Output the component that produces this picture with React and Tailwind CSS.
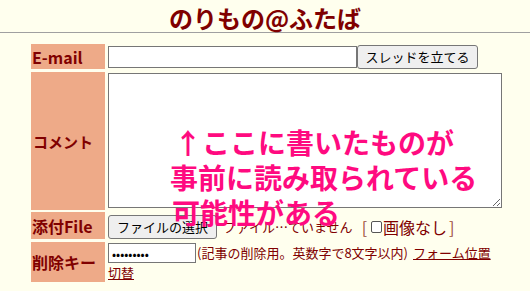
export default function App() {
  return (
    <div className="relative w-[530px] h-[291px] overflow-hidden bg-[#ffffee] font-['Noto_Sans_CJK_JP',sans-serif] text-[#800000]">
      <div className="h-[32px] flex items-center justify-center text-[24px] font-bold leading-none pt-[4px]">
        のりもの@ふたば
      </div>
      <div className="border-t border-[#a0a0a0]" />
      <div className="ml-[31px] mt-[11px] flex flex-col">
        {/* E-mail */}
        <div className="flex h-[25px] gap-[3px]">
          <div className="w-[74px] bg-[#eeaa88] flex items-center pl-[1px] text-[16px] font-bold leading-none">E-mail</div>
          <div className="flex items-center">
            <input className="w-[249px] h-[22px] border border-[#767676] bg-white text-[13px] px-[2px]" />
            <button className="w-[121px] h-[24px] border border-[#767676] rounded-[3px] bg-[#efefef] text-[13px] text-black leading-none font-['Noto_Sans_CJK_JP',sans-serif]">スレッドを立てる</button>
          </div>
        </div>
        {/* Comment */}
        <div className="flex h-[138px] gap-[3px] mt-[3px]">
          <div className="w-[74px] bg-[#eeaa88] flex items-center pl-[2px] text-[15px] font-bold leading-none">コメント</div>
          <div className="pt-[1px]">
            <textarea readOnly className="block w-[394px] h-[135px] border border-[#767676] bg-white" />
          </div>
        </div>
        {/* File */}
        <div className="flex h-[27px] gap-[3px] mt-[2px]">
          <div className="w-[74px] bg-[#eeaa88] flex items-center pl-[1px] text-[16px] font-bold leading-none">添付File</div>
          <div className="flex items-center pt-[3px] whitespace-nowrap">
            <span className="w-[109px] h-[24px] flex items-center justify-center border border-[#767676] rounded-[3px] bg-[#efefef] text-[13px] text-black">ファイルの選択</span>
            <span className="ml-[6px] text-[13px]">ファイル…ていません</span>
            <span className="ml-[9px] text-[16px] text-[#9c4a3a]">[</span>
            <span className="ml-[4px] inline-block w-[11px] h-[12px] border border-[#555] rounded-[2px] bg-white" />
            <span className="ml-[1px] text-[16px]">画像なし</span>
            <span className="ml-[2px] text-[16px] text-[#9c4a3a]">]</span>
          </div>
        </div>
        {/* Delete key */}
        <div className="flex h-[40px] gap-[3px] mt-[3px]">
          <div className="w-[74px] bg-[#eeaa88] flex items-center pl-[1px] text-[16px] font-bold leading-none">削除キー</div>
          <div className="flex flex-col pt-[1px]">
            <div className="flex items-center whitespace-nowrap">
              <input type="password" readOnly defaultValue="123456789" className="w-[88px] h-[20px] border border-[#767676] bg-white text-[12px] text-black px-[3px]" />
              <span className="text-[13px] ml-[1px]">(記事の削除用。英数字で8文字以内)</span>
              <a className="ml-[5px] text-[13px] underline">フォーム位置</a>
            </div>
            <a className="text-[13px] underline leading-[17px] mt-[1px]">切替</a>
          </div>
        </div>
      </div>
      <div className="absolute left-[170px] top-[125px] text-[28px] leading-[35px] font-bold text-[#ff0a80] whitespace-nowrap">
        <div className="pl-[4px]">↑ここに書いたものが</div>
        <div>事前に読み取られている</div>
        <div className="pl-[2px]">可能性がある</div>
      </div>
    </div>
  );
}
